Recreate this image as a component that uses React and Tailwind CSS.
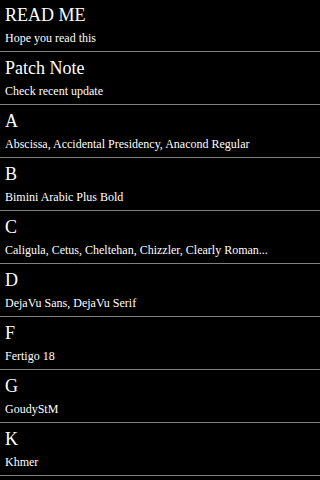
const rows = [
  { title: "READ ME", sub: "Hope you read this" },
  { title: "Patch Note", sub: "Check recent update" },
  { title: "A", sub: "Abscissa, Accidental Presidency, Anacond Regular" },
  { title: "B", sub: "Bimini Arabic Plus Bold" },
  { title: "C", sub: "Caligula, Cetus, Cheltehan, Chizzler, Clearly Roman..." },
  { title: "D", sub: "DejaVu Sans, DejaVu Serif" },
  { title: "F", sub: "Fertigo 18" },
  { title: "G", sub: "GoudyStM" },
  { title: "K", sub: "Khmer" },
];

export default function App() {
  return (
    <div className="h-[480px] w-[320px] overflow-hidden bg-black text-white [font-family:'Liberation_Serif','Times_New_Roman',serif]">
      <ul className="-mt-px">
        {rows.map((r) => (
          <li key={r.title} className="h-[53px] border-b border-[#808080] px-[5px] pt-[5px]">
            <div className="text-[18px] leading-[22px]">{r.title}</div>
            <div className="mt-[5px] text-[12px] leading-[14px]">{r.sub}</div>
          </li>
        ))}
      </ul>
    </div>
  );
}
